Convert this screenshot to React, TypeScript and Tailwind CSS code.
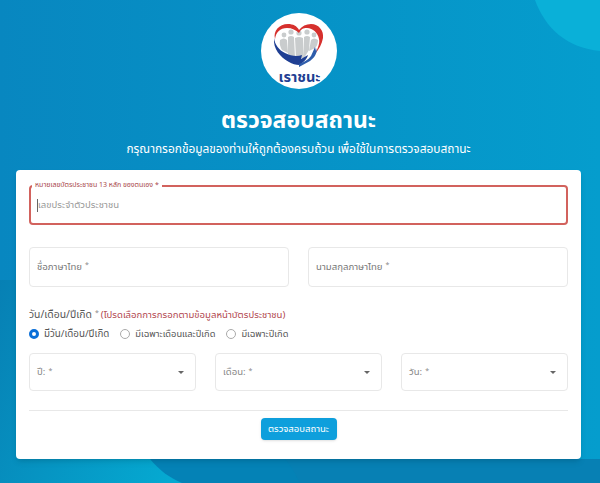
import React from 'react';

const thai = { fontFamily: '"Noto Sans Thai", "Noto Sans", "Noto Sans CJK SC", sans-serif' };

function Logo() {
  return (
    <div className="h-[76px] w-[76px] rounded-full bg-white">
      <svg viewBox="0 0 76 76" className="h-[76px] w-[76px]">
        {/* people */}
        <g fill="#c9cccd">
          <circle cx="23" cy="22" r="2.4" />
          <circle cx="30" cy="19" r="2.6" />
          <circle cx="38" cy="20" r="2.6" />
          <circle cx="46" cy="19" r="2.6" />
          <circle cx="53" cy="22" r="2.4" />
          <path d="M19 27q4-3 7 0l1 13-6-3q-3-5-2-10zM27 24q3-2 6 0l1 21-7-4zM34 25q4-2 8 0l1 20h-8zM43 24q3-2 6 0l-1 13-5 8zM50 27q3-3 7 0q0 5-3 8l-6 3z" />
        </g>
        {/* heart, red lobes */}
        <path d="M14 26c-2-8 4-15 13-15 5 0 9 2 11 6 3-4 7-6 12-6 8 0 13 7 12 14-1 6-4 11-8 16 3-6 5-11 4-15-1-6-6-11-12-11-4 0-6 1-8 5-3-3-7-5-12-5-7 0-11 4-12 11z" fill="#d6302d" />
        {/* heart, blue swoosh and hand */}
        <path d="M13 25c1 7 5 12 11 15 6 3 12 4 17 2l-1 4 7-4c-1 4-5 8-9 10-3 0-7-1-10-3-9-5-16-13-15-24z" fill="#1f3f93" />
        <path d="M38 51c5-2 9-4 12-8l4-9 1 4 1-3c0 6-3 10-7 13l-11 6z" fill="#2f5dab" />
        <text x="38.5" y="69" textAnchor="middle" fill="#1f3f93" fontSize="14.5" fontWeight="700" style={thai}>เราชนะ</text>
      </svg>
    </div>
  );
}

function Star() {
  return <span className="relative -top-[2px] ml-[3px] text-[7px] text-[#888]">*</span>;
}

function Field({ label, className = '' }: { label: string; className?: string }) {
  return (
    <div className={`flex h-[40px] items-center rounded border border-[#e8e8e8] px-[7px] text-[9.6px] text-[#777] ${className}`}>
      {label}
      <Star />
    </div>
  );
}

function SelectBox({ label }: { label: string }) {
  return (
    <div className="flex h-[38px] flex-1 items-center justify-between rounded border border-[#e8e8e8] pl-[7px] pr-[11px] text-[9.6px] text-[#888]">
      <span>
        {label}
        <Star />
      </span>
      <span className="h-0 w-0 border-x-[3px] border-t-[3px] border-x-transparent border-t-[#666]" />
    </div>
  );
}

function Radio({ label, checked, className = '' }: { label: string; checked?: boolean; className?: string }) {
  return (
    <div className={`flex items-center gap-[5px] text-[#555] ${className}`}>
      {checked ? (
        <span className="h-[10px] w-[10px] rounded-full border-[3px] border-[#0a6fd8] bg-white" />
      ) : (
        <span className="h-[10px] w-[10px] rounded-full border border-[#aaa] bg-white" />
      )}
      {label}
    </div>
  );
}

export default function App() {
  return (
    <div className="relative h-[483px] w-[600px] overflow-hidden bg-gradient-to-r from-[#0887c0] to-[#059dcd]" style={thai}>
      {/* background waves */}
      <svg viewBox="0 0 600 483" className="absolute left-0 top-0 h-full w-full">
        <defs>
          <linearGradient id="bl" x1="0" y1="0" x2="1" y2="0.4">
            <stop offset="0" stopColor="#0780b4" />
            <stop offset="1" stopColor="#05a9d1" />
          </linearGradient>
        </defs>
        <path d="M535 0c10 28 32 48 65 51V0z" fill="#0ab0d8" />
        <path d="M0 280h220v203H0z" fill="url(#bl)" />
        <path d="M150 459c10 12 20 19 32 24h118v-24z" fill="#0482b6" />
        <path d="M285 459c6 6 10 15 15 24h300v-24z" fill="#0780b4" />
      </svg>

      <div className="relative ml-[16px] flex w-[565px] flex-col items-center pt-[13px]">
        <Logo />
        <h1 className="mt-[17px] text-[23px] font-bold leading-[30px] text-white">ตรวจสอบสถานะ</h1>
        <p className="mt-[3px] text-[11.9px] leading-[20px] text-white">
          กรุณากรอกข้อมูลของท่านให้ถูกต้องครบถ้วน เพื่อใช้ในการตรวจสอบสถานะ
        </p>

        <div className="mt-[11px] h-[289px] w-[565px] rounded bg-white px-[13px] pt-[15px] shadow-md">
          <div className="relative flex h-[40px] items-center rounded border-2 border-[#d2625d] px-[6px] text-[9.6px] text-[#999]">
            <span className="absolute -top-[7px] left-[1px] bg-white px-[3px] text-[7px] leading-[10px] text-[#a8464a]">
              หมายเลขบัตรประชาชน 13 หลัก ของตนเอง *
            </span>
            <span className="h-[13px] w-px bg-[#666]" />
            เลขประจำตัวประชาชน
          </div>

          <div className="mt-[22px] flex gap-[19px]">
            <Field label="ชื่อภาษาไทย" className="flex-1" />
            <Field label="นามสกุลภาษาไทย" className="flex-1" />
          </div>

          <div className="mt-[20px] flex items-center text-[10.4px] leading-[16px] text-[#555]">
            วัน/เดือน/ปีเกิด
            <Star />
            <span className="ml-[2px] text-[9.6px] text-[#b2474f]">(โปรดเลือกการกรอกตามข้อมูลหน้าบัตรประชาชน)</span>
          </div>

          <div className="mt-[3px] flex gap-[11px] leading-[16px]">
            <Radio label="มีวัน/เดือน/ปีเกิด" checked className="text-[9.8px]" />
            <Radio label="มีเฉพาะเดือนและปีเกิด" className="text-[9.3px]" />
            <Radio label="มีเฉพาะปีเกิด" className="text-[9.3px]" />
          </div>

          <div className="mt-[11px] flex gap-[19px]">
            <SelectBox label="ปี:" />
            <SelectBox label="เดือน:" />
            <SelectBox label="วัน:" />
          </div>

          <div className="mt-[19px] border-t border-[#e8e8e8]" />

          <div className="mt-[7px] flex justify-center">
            <button className="h-[22px] w-[76px] rounded-sm bg-[#0e9fdc] text-[9.5px] text-white shadow-sm">ตรวจสอบสถานะ</button>
          </div>
        </div>
      </div>
    </div>
  );
}
